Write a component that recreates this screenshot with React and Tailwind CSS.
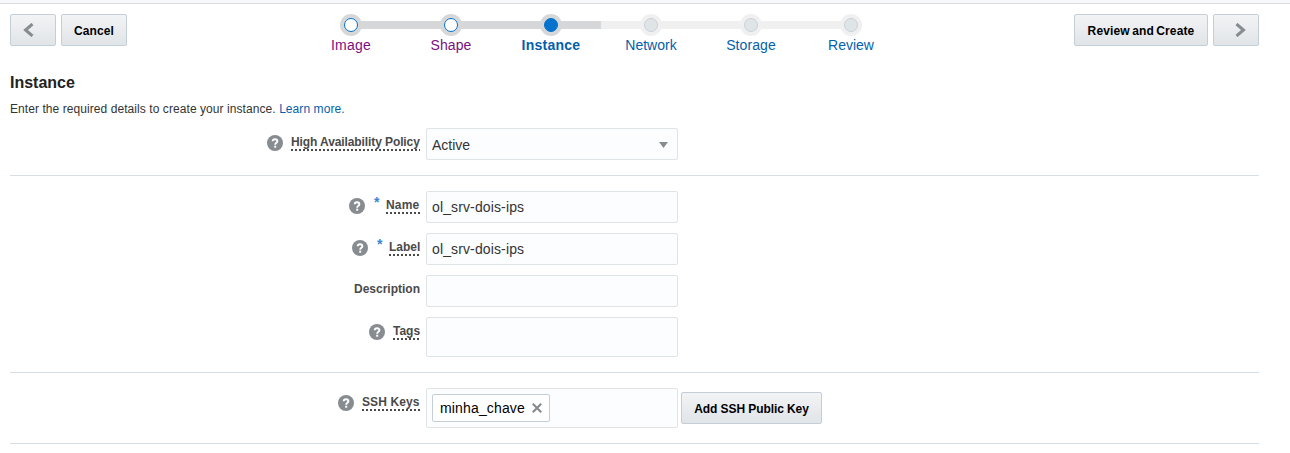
import React from "react";

const steps = [
  { name: "Image", state: "done", text: "tracking-[0.2px] text-[#7b0f80]" },
  { name: "Shape", state: "done", text: "tracking-[0.1px] text-[#7b0f80]" },
  { name: "Instance", state: "current", text: "font-bold tracking-[0.25px] text-[#045fab]" },
  { name: "Network", state: "todo", text: "text-[#045fab]" },
  { name: "Storage", state: "todo", text: "tracking-[0.1px] text-[#045fab]" },
  { name: "Review", state: "todo", text: "text-[#045fab]" },
];

const tracks = {
  Image: ["bg-transparent", "bg-[#d6d7d8]"],
  Shape: ["bg-[#d6d7d8]", "bg-[#d6d7d8]"],
  Instance: ["bg-[#d6d7d8]", "bg-[#d6d7d8]"],
  Network: ["bg-[#f0f0f0]", "bg-[#f0f0f0]"],
  Storage: ["bg-[#f0f0f0]", "bg-[#f0f0f0]"],
  Review: ["bg-[#f0f0f0]", "bg-transparent"],
};

const dots = {
  done: "border-[#0572ce] bg-white",
  current: "border-[#0572ce] bg-[#0572ce]",
  todo: "border-[#c9d1d9] bg-[#dfe4e7]",
};

function Button({ children, className }) {
  return (
    <button
      className={`flex h-8 shrink-0 items-center justify-center rounded-[2px] border border-[#c4ced7] bg-linear-to-b from-[#f2f3f5] to-[#e1e5e8] pt-px text-xs font-bold whitespace-nowrap text-black ${className}`}
    >
      {children}
    </button>
  );
}

function Chevron({ flip }) {
  return (
    <svg width="12" height="14" viewBox="0 0 12 14" className={`-mt-0.5 ${flip ? "rotate-180" : ""}`}>
      <path d="M9.5 1 2.5 7l7 6" fill="none" stroke="#878c91" strokeWidth="3" />
    </svg>
  );
}

function Step({ step }) {
  const [left, right] = tracks[step.name];
  return (
    <li className="w-[100px]">
      <div className="grid h-[22px] grid-cols-2 items-center">
        <span className={`col-start-1 row-start-1 h-2 ${left}`} />
        <span className={`col-start-2 row-start-1 h-2 ${right}`} />
        <span
          className={`col-span-2 col-start-1 row-start-1 flex size-[22px] items-center justify-center justify-self-center rounded-full ${step.state === "todo" ? "bg-[#f0f0f0]" : "bg-[#d6d7d8]"}`}
        >
          <span className={`size-[14px] rounded-full border ${dots[step.state]}`} />
        </span>
      </div>
      <div className={`text-center text-sm leading-[18px] ${step.text}`}>{step.name}</div>
    </li>
  );
}

function Help() {
  return (
    <svg width="16" height="16" viewBox="0 0 16 16" className="mt-[7px] shrink-0">
      <circle cx="8" cy="8" r="8" fill="#878c91" />
      <path d="M5.7 6.3C5.7 4.8 6.7 4.2 8 4.2s2.4.7 2.4 2c0 1.6-2.2 1.6-2.2 3.5" fill="none" stroke="#fff" strokeWidth="1.9" />
      <rect x="7.2" y="10.7" width="2" height="2" fill="#fff" />
    </svg>
  );
}

function Row({ label, help, required, hint = true, width = "", children }) {
  return (
    <div className="flex items-start">
      <div className="mr-1.5 flex w-[410px] items-start justify-end">
        {help && <Help />}
        {required && (
          <span className="ml-[9px] h-6 w-[5px] pt-[3px] text-[14px] leading-4 font-bold text-[#3b86d6]">*</span>
        )}
        <label
          className={`mt-1.5 text-xs leading-4 font-bold whitespace-nowrap text-[#4a4a4a] ${width} ${required ? "ml-[7px]" : "ml-2"}`}
        >
          {label}
          {hint && (
            <span className="-mt-px block h-0.5 bg-[repeating-linear-gradient(90deg,#4a4a4a_0_2px,transparent_2px_4px)]" />
          )}
        </label>
      </div>
      {children}
    </div>
  );
}

function Field({ children, className = "h-8" }) {
  return (
    <div
      className={`flex w-[252px] items-center rounded-[2px] border border-[#dfe4e7] bg-[#fcfdfe] px-[5px] text-sm text-[#333] ${className}`}
    >
      {children}
    </div>
  );
}

export default function App() {
  return (
    <div className="h-[453px] w-[1290px] overflow-hidden bg-white font-['Liberation_Sans',Arial,sans-serif] text-[#333]">
      <div className="h-1 border-b border-[#d6dade] bg-[#f8f9fb]" />
      <div className="pr-[31px] pl-2.5">
        <header className="flex h-[62px] items-start pt-2.5">
          <Button className="w-[46px] pr-2">
            <Chevron />
          </Button>
          <Button className="ml-[5px] w-[66px] tracking-[0.1px]">Cancel</Button>
          <ol className="ml-[174px] flex">
            {steps.map((s) => (
              <Step key={s.name} step={s} />
            ))}
          </ol>
          <Button className="ml-auto w-[134px] tracking-[0.12px] [word-spacing:-1px]">Review and Create</Button>
          <Button className="ml-[5px] w-[46px] pl-2">
            <Chevron flip />
          </Button>
        </header>

        <h1 className="mt-[7px] text-base leading-5 font-bold text-[#222]">Instance</h1>
        <p className="mt-2 text-xs leading-4 tracking-[0.07px]">
          Enter the required details to create your instance.{" "}
          <a className="text-[#045fab]">Learn more.</a>
        </p>

        <section className="mt-[11px] h-12 border-b border-[#d6dfe6]">
          <Row label="High Availability Policy" help width="w-[129px] tracking-[-0.1px]">
            <Field className="h-8 justify-between pt-0.5">
              Active
              <svg width="9" height="6" viewBox="0 0 9 6" className="mr-1">
                <path d="M0 0h9L4.5 6z" fill="#878c91" />
              </svg>
            </Field>
          </Row>
        </section>

        <section className="flex h-[197px] flex-col gap-2.5 border-b border-[#d6dfe6] pt-[15px]">
          <Row label="Name" help required width="w-[34px] tracking-[0.2px]">
            <Field className="h-8 tracking-[0.13px]">ol_srv-dois-ips</Field>
          </Row>
          <Row label="Label" help required width="w-[31px]">
            <Field className="h-8 tracking-[0.13px]">ol_srv-dois-ips</Field>
          </Row>
          <Row label="Description" hint={false}>
            <Field />
          </Row>
          <Row label="Tags" help width="w-[27px]">
            <Field className="h-10" />
          </Row>
        </section>

        <section className="h-[71px] border-b border-[#d6dfe6] pt-[15px]">
          <Row label="SSH Keys" help width="w-[58px] tracking-[0.1px]">
            <Field className="h-10">
              <span className="flex h-7 w-[118px] items-center justify-between rounded-[2px] border border-[#c4ced7] bg-white pr-[7px] pl-[7px] tracking-[0.15px] text-black">
                minha_chave
                <svg width="10" height="10" viewBox="0 0 10 10">
                  <path d="m.8.8 8.4 8.4M9.2.8.8 9.2" stroke="#878c91" strokeWidth="2.2" />
                </svg>
              </span>
            </Field>
            <Button className="mt-1 ml-[3px] w-[141px] tracking-[-0.08px]">Add SSH Public Key</Button>
          </Row>
        </section>
      </div>
    </div>
  );
}
